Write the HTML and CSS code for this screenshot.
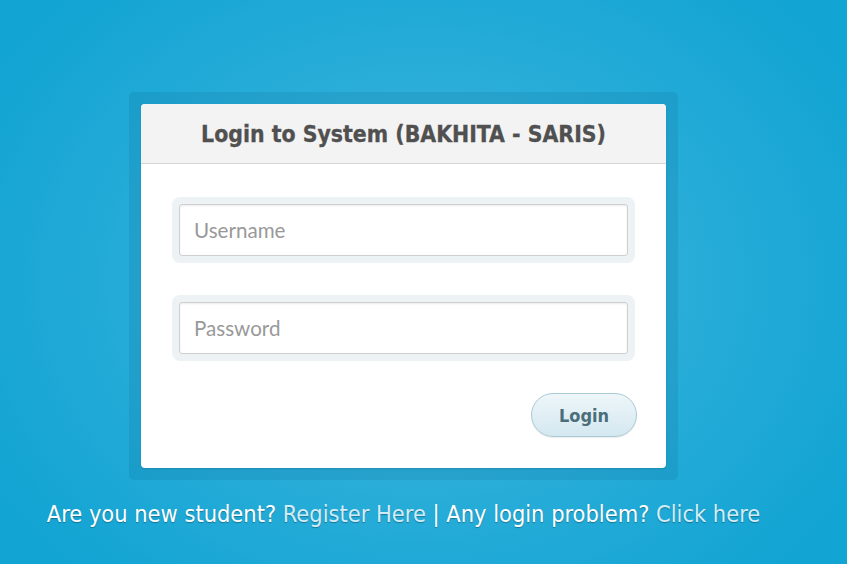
FILE: index.html
```html
<!DOCTYPE html>
<html>
<head>
<meta charset="utf-8">
<link rel="stylesheet" href="styles.css">
</head>
<body>
<div class="page">
  <div class="frame">
    <div class="card">
      <div class="card-head">Login to System (BAKHITA - SARIS)</div>
      <div class="card-body">
        <div class="field"><input class="input" type="text" placeholder="Username"></div>
        <div class="field"><input class="input" type="password" placeholder="Password"></div>
        <div class="actions"><button class="btn">Login</button></div>
      </div>
    </div>
  </div>
  <p class="note">Are you new student? <a href="#">Register Here</a> | Any login problem? <a href="#">Click here</a></p>
</div>
</body>
</html>
```
FILE: styles.css
```css
html, body {
  margin: 0;
  height: 100%;
}
body {
  background: radial-gradient(ellipse 500px 400px at 423px 282px, #44bae1 0%, #2caed9 45%, #12a4d3 100%);
  background-color: #12a4d3;
  font-family: "DejaVu Sans Condensed", "DejaVu Sans", sans-serif;
  overflow: hidden;
}
.page {
  width: 847px;
  height: 564px;
  box-sizing: border-box;
  padding: 92px 40px 0 0;
  display: flex;
  flex-direction: column;
  align-items: center;
}
.frame {
  width: 549px;
  box-sizing: border-box;
  padding: 12px;
  background: rgba(0, 60, 100, 0.1);
  border-radius: 5px;
}
.card {
  background: #fff;
  border-radius: 4px;
  overflow: hidden;
  box-shadow: 0 1px 2px rgba(0,0,0,0.12);
}
.card-head {
  height: 59px;
  background: #f3f3f3;
  border-bottom: 1px solid #d6d6d6;
  color: #505050;
  font-weight: bold;
  font-size: 22.8px;
  line-height: 60px;
  text-align: center;
  -webkit-text-stroke: 0.3px #505050;
}
.card-body {
  padding: 33px 29px 31px 31px;
  display: flex;
  flex-direction: column;
  gap: 32px;
}
.field {
  width: 463px;
  box-sizing: border-box;
  padding: 7px;
  background: #edf2f5;
  border-radius: 8px;
}
.input {
  display: block;
  width: 100%;
  height: 52px;
  box-sizing: border-box;
  border: 1px solid #cfcfcf;
  border-radius: 3px;
  box-shadow: inset 0 1px 2px rgba(0,0,0,0.08);
  padding: 0 14px;
  font-family: Lato, "Open Sans", sans-serif;
  font-size: 20.6px;
  color: #555;
  background: #fff;
  outline: none;
}
.input::placeholder {
  color: #999;
}
.actions {
  display: flex;
  justify-content: flex-end;
}
.btn {
  width: 106px;
  height: 44px;
  border-radius: 22px;
  border: 1px solid #a9cbd8;
  background: linear-gradient(#eef6f9, #d4e8f0);
  color: #4b6e7b;
  font-family: "DejaVu Sans Condensed", "DejaVu Sans", sans-serif;
  font-weight: bold;
  font-size: 18px;
  box-shadow: 0 1px 1px rgba(0,0,0,0.08);
  padding: 0;
}
.note {
  margin: 20px 0 0;
  color: #fff;
  font-size: 23.4px;
  line-height: 28px;
  white-space: nowrap;
  text-shadow: 0 1px 1px rgba(0,0,0,0.3);
}
.note a {
  color: #d2ecf7;
  text-decoration: none;
}
```
